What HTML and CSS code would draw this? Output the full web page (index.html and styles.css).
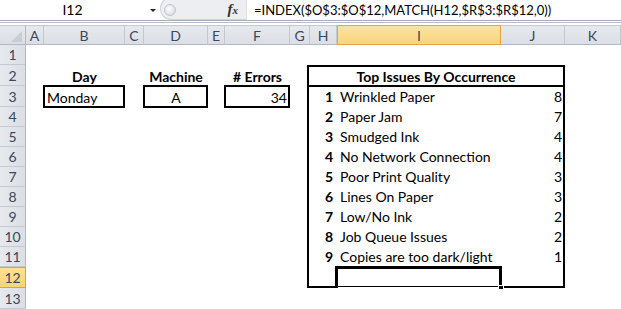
FILE: index.html
```html
<!DOCTYPE html>
<html>
<head>
<meta charset="utf-8">
<link rel="stylesheet" href="styles.css">
</head>
<body>
<div class="app">
  <div class="fbar">
    <div class="namebox">I12</div>
    <div class="nb-drop"><span class="tri"></span></div>
    <div class="fx-area">
      <span class="knob"></span>
      <span class="fx">f<span class="fx-x">x</span></span>
    </div>
    <div class="formula">=INDEX($O$3:$O$12,MATCH(H12,$R$3:$R$12,0))</div>
  </div>
  <div class="sep"></div>
  <div class="sheet">
    <div class="ch corner"></div>
    <div class="ch">A</div>
    <div class="ch">B</div>
    <div class="ch">C</div>
    <div class="ch">D</div>
    <div class="ch">E</div>
    <div class="ch">F</div>
    <div class="ch">G</div>
    <div class="ch">H</div>
    <div class="ch sel">I</div>
    <div class="ch">J</div>
    <div class="ch">K</div>

    <div class="rh">1</div>
    <div class="rh">2</div>
    <div class="rh">3</div>
    <div class="rh">4</div>
    <div class="rh">5</div>
    <div class="rh">6</div>
    <div class="rh">7</div>
    <div class="rh">8</div>
    <div class="rh">9</div>
    <div class="rh">10</div>
    <div class="rh">11</div>
    <div class="rh sel">12</div>
    <div class="rh">13</div>

    <div class="label col-b row-2">Day</div>
    <div class="label col-d row-2">Machine</div>
    <div class="label col-f row-2"># Errors</div>

    <div class="box col-b row-3 left">Monday</div>
    <div class="box col-d row-3 center">A</div>
    <div class="box col-f row-3 right">34</div>

    <div class="tbl">
      <div class="tt">Top Issues By Occurrence</div>
      <div class="num">1</div><div class="item">Wrinkled Paper</div><div class="val">8</div>
      <div class="num">2</div><div class="item">Paper Jam</div><div class="val">7</div>
      <div class="num">3</div><div class="item">Smudged Ink</div><div class="val">4</div>
      <div class="num">4</div><div class="item">No Network Connection</div><div class="val">4</div>
      <div class="num">5</div><div class="item">Poor Print Quality</div><div class="val">3</div>
      <div class="num">6</div><div class="item">Lines On Paper</div><div class="val">3</div>
      <div class="num">7</div><div class="item">Low/No Ink</div><div class="val">2</div>
      <div class="num">8</div><div class="item">Job Queue Issues</div><div class="val">2</div>
      <div class="num">9</div><div class="item">Copies are too dark/light</div><div class="val">1</div>
      <div class="num"></div>
      <div class="item active"><span class="selbox"><span class="handle"></span></span></div>
      <div class="val"></div>
    </div>
  </div>
</div>
</body>
</html>
```
FILE: styles.css
```css
* { box-sizing: border-box; }
body {
  margin: 0;
  background: #fff;
  font-family: Lato, "Liberation Sans", sans-serif;
  font-size: 14px;
  color: #000;
}
.app { width: 621px; height: 309px; overflow: hidden; }

/* formula bar */
.fbar {
  display: flex;
  height: 21px;
  border-bottom: 1px solid #a7afba;
}
.namebox {
  width: 145px;
  text-align: center;
  line-height: 20px;
}
.nb-drop {
  width: 15px;
  display: flex;
  align-items: center;
  justify-content: center;
}
.tri {
  width: 0; height: 0;
  border-left: 3px solid transparent;
  border-right: 3px solid transparent;
  border-top: 3px solid #222;
}
.fx-area {
  width: 86px;
  height: 23px;
  display: flex;
  align-items: center;
  justify-content: space-between;
  padding: 2px 8px 0 3px;
  background: #eceef1;
  border: 1px solid #cfd3d9;
  border-right: none;
  border-radius: 11px 0 0 11px;
  margin-top: -3px;
}
.knob {
  width: 12px; height: 12px;
  border-radius: 50%;
  border: 1px solid #c2c6cc;
  background: radial-gradient(circle at 40% 40%, #ffffff 0%, #e4e6ea 55%, #c9cdd3 100%);
}
.fx {
  font-family: "Liberation Serif", serif;
  font-style: italic;
  font-weight: bold;
  font-size: 15px;
  color: #333;
}
.fx-x { font-size: 11px; }
.formula {
  flex: 1;
  padding-left: 7px;
  line-height: 20px;
  font-size: 13px;
  white-space: nowrap;
  border-left: 1px solid #dde0e4;
}
.sep {
  height: 1px;
  margin: 1px 0 2px;
  background: #b6bdc7;
}

/* sheet grid */
.sheet {
  display: grid;
  grid-template-columns: 26px 18px 81px 19px 64px 17px 65px 20px 27px 164px 64px 1fr;
  grid-template-rows: 20px 20px 21px 21px 20px 20px 20px 20px 20px 20px 20px 20px 21px 21px;
}
.ch {
  background: linear-gradient(#e6e9ed, #dbdfe5);
  border-top: 1px solid #c6cad0;
  border-right: 1px solid #c3c7ce;
  border-bottom: 1px solid #b3b9c2;
  color: #3a4760;
  display: flex;
  align-items: center;
  justify-content: center;
  font-size: 14px;
}
.corner { position: relative; border-right-color: #b3b9c2; }
.corner::after {
  content: "";
  position: absolute;
  left: 11px; top: 5px;
  width: 11px; height: 11px;
  background: #c9cdd3;
  clip-path: polygon(100% 0, 100% 100%, 0 100%);
}
.rh {
  grid-column: 1;
  background: linear-gradient(90deg, #e6e9ed, #dbdfe5);
  border-right: 1px solid #b3b9c2;
  border-bottom: 1px solid #c6cad0;
  color: #3a4760;
  display: flex;
  align-items: center;
  justify-content: center;
  font-size: 14px;
}
.ch.sel {
  background: linear-gradient(#fbe3a4, #f9d57a);
  border-color: #e9a443;
  border-left: 1px solid #e9a443;
}
.rh.sel {
  background: linear-gradient(#fde09a, #fad573);
  border-color: #e3a03f;
  border-top: 1px solid #e3a03f;
}

.col-b { grid-column: 3; }
.col-d { grid-column: 5; }
.col-f { grid-column: 7; }
.row-2 { grid-row: 3; }
.row-3 { grid-row: 4; }

.label {
  font-weight: bold;
  display: flex;
  align-items: center;
  justify-content: center;
  padding-top: 2px;
}
.box {
  border: 2px solid #000;
  margin: -1px 0 -1px -1px;
  display: flex;
  align-items: center;
  padding: 1px 1px 0 2px;
}
.box.left { justify-content: flex-start; }
.box.center { justify-content: center; }
.box.right { justify-content: flex-end; }

/* top issues table */
.tbl {
  grid-column: 9 / 12;
  grid-row: 3 / 14;
  margin-left: -3px;
  border: 2px solid #000;
  display: grid;
  grid-template-columns: 28px 164px 1fr;
  grid-template-rows: 20px repeat(9, 20px) 1fr;
}
.tt {
  grid-column: 1 / -1;
  border-bottom: 2px solid #000;
  font-weight: bold;
  display: flex;
  align-items: center;
  justify-content: center;
}
.num {
  font-weight: bold;
  text-align: right;
  padding-right: 4px;
  line-height: 20px;
}
.item {
  padding-left: 3px;
  line-height: 20px;
  white-space: nowrap;
}
.val {
  text-align: right;
  padding-right: 1px;
  line-height: 20px;
}
.item.active { position: relative; }
.selbox {
  position: absolute;
  left: -2px; right: -1px; top: -1px; bottom: -1px;
  border: 3px solid #000;
  border-bottom-width: 1px;
}
.selbox::after {
  content: "";
  position: absolute;
  left: 0; right: 0; bottom: -3px;
  height: 2px;
  background: #fff;
}
.handle {
  position: absolute;
  right: -5px; bottom: -4px;
  width: 6px; height: 5px;
  background: #000;
  border: 1px solid #fff;
  z-index: 1;
}
```
